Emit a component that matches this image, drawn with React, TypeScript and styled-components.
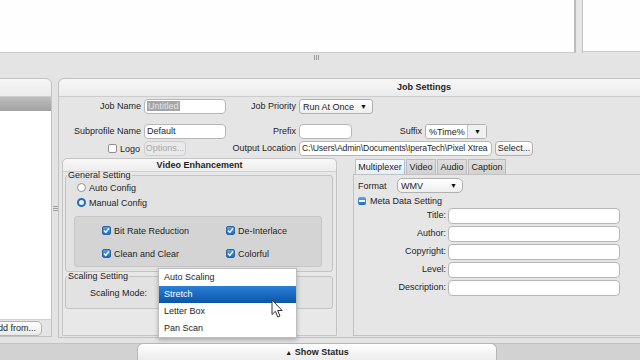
import { Fragment } from "react";
import styled, { createGlobalStyle } from "styled-components";

const GlobalStyle = createGlobalStyle`
  html, body {
    margin: 0;
    padding: 0;
  }
  body {
    width: 640px;
    height: 360px;
    overflow: hidden;
    background: #e3e3e3;
    font-family: "Liberation Sans", Arial, sans-serif;
    font-size: 9px;
    color: #1e1e1e;
  }
  * {
    box-sizing: border-box;
  }
`;

const metaFields = ["Title:", "Author:", "Copyright:", "Level:", "Description:"];
const scaleOptions = ["Auto Scaling", "Stretch", "Letter Box", "Pan Scan"];
const tabs = [
  { label: "Multiplexer", width: 50 },
  { label: "Video", width: 30 },
  { label: "Audio", width: 30 },
  { label: "Caption", width: 38 },
];

function Arrow() {
  return <ArrowMark>▼</ArrowMark>;
}

function CheckMark() {
  return (
    <CheckBox $checked>
      <svg width="7" height="7" viewBox="0 0 7 7">
        <path d="M1 3.6 L2.8 5.4 L6 1.4" fill="none" stroke="#fff" strokeWidth="1.4" />
      </svg>
    </CheckBox>
  );
}

function Pointer() {
  return (
    <Cursor width="13" height="20" viewBox="0 0 13 20">
      <path
        d="M1 1 L1 15.5 L4.4 12.3 L6.8 18 L9 17 L6.7 11.5 L11.2 11.5 Z"
        fill="#fff"
        stroke="#333"
        strokeWidth="1"
        strokeLinejoin="round"
      />
    </Cursor>
  );
}

export default function App() {
  return (
    <>
      <GlobalStyle />
      <Screen>
        <TopRow>
          <WhitePane />
          <PaneGap />
          <SmallPane />
        </TopRow>
        <HSplitter>
          <HGrip>
            <i />
            <i />
            <i />
          </HGrip>
        </HSplitter>
        <Middle>
          <SidePanel>
            <SideHeader />
            <ListHead />
            <ListBody />
            <SideFooter>
              <SideButton>Add from...</SideButton>
            </SideFooter>
          </SidePanel>
          <VSplitter>
            <VGrip>
              <i />
              <i />
              <i />
            </VGrip>
          </VSplitter>
          <MainPanel>
            <PanelHeader>Job Settings</PanelHeader>
            <FormRow $top={2}>
              <Label>Job Name</Label>
              <Field>
                <Selected>Untitled</Selected>
              </Field>
              <Label>Job Priority</Label>
              <Control>
                <SelectBox $w={74}>
                  Run At Once
                  <Arrow />
                </SelectBox>
              </Control>
            </FormRow>
            <FormRow $top={10}>
              <Label>Subprofile Name</Label>
              <Field>Default</Field>
              <Label>Prefix</Label>
              <Control>
                <Field $w={53} />
                <Label $w={67}>Suffix</Label>
                <SelectBox $w={62} $split>
                  %Time%
                  <Arrow />
                </SelectBox>
              </Control>
            </FormRow>
            <FormRow $top={2}>
              <CheckLabel>
                <CheckBox />
                Logo
              </CheckLabel>
              <div>
                <Button $disabled $w={42}>
                  Options...
                </Button>
              </div>
              <Label>Output Location</Label>
              <Control>
                <Field $w={193} $tight>
                  C:\Users\Admin\Documents\IperaTech\Pixel Xtrea
                </Field>
                <Button $w={38}>Select...</Button>
              </Control>
            </FormRow>
            <Lower>
              <VEPanel>
                <SubHeader>Video Enhancement</SubHeader>
                <GroupBox $gap={-2}>
                  <Legend>General Setting</Legend>
                  <RadioRow>
                    <Radio />
                    Auto Config
                  </RadioRow>
                  <RadioRow>
                    <Radio $on />
                    Manual Config
                  </RadioRow>
                  <InnerBox>
                    <CheckLabel $left>
                      <CheckMark />
                      Bit Rate Reduction
                    </CheckLabel>
                    <CheckLabel $left>
                      <CheckMark />
                      De-Interlace
                    </CheckLabel>
                    <CheckLabel $left>
                      <CheckMark />
                      Clean and Clear
                    </CheckLabel>
                    <CheckLabel $left>
                      <CheckMark />
                      Colorful
                    </CheckLabel>
                  </InnerBox>
                </GroupBox>
                <GroupBox $gap={-1}>
                  <Legend>Scaling Setting</Legend>
                  <ScaleRow>
                    Scaling Mode:
                    <DropList>
                      {scaleOptions.map((o) => (
                        <DropItem key={o} $active={o === "Stretch"}>
                          {o}
                        </DropItem>
                      ))}
                      <Pointer />
                    </DropList>
                  </ScaleRow>
                </GroupBox>
              </VEPanel>
              <TabPanel>
                <TabBar>
                  {tabs.map((t, i) => (
                    <Tab key={t.label} $active={i === 0} style={{ width: t.width }}>
                      {t.label}
                    </Tab>
                  ))}
                </TabBar>
                <TabBody>
                  <FormatRow>
                    <FormatLabel>Format</FormatLabel>
                    <SelectBox $w={66} $round>
                      WMV
                      <Arrow />
                    </SelectBox>
                  </FormatRow>
                  <MetaHead>
                    <Minus />
                    Meta Data Setting
                  </MetaHead>
                  <MetaGrid>
                    {metaFields.map((f) => (
                      <Fragment key={f}>
                        <Label>{f}</Label>
                        <Field $w={172} $tall />
                      </Fragment>
                    ))}
                  </MetaGrid>
                </TabBody>
              </TabPanel>
            </Lower>
          </MainPanel>
        </Middle>
        <BottomBar>
          <StatusStrip>
            <StatusButton>
              <span>▲</span> Show Status
            </StatusButton>
          </StatusStrip>
        </BottomBar>
      </Screen>
    </>
  );
}

const Screen = styled.div`
  width: 640px;
  height: 360px;
  display: flex;
  flex-direction: column;
  overflow: hidden;
`;

const TopRow = styled.div`
  height: 53px;
  display: flex;
`;

const WhitePane = styled.div`
  flex: 1;
  background: #fefefe;
  border-right: 2px solid #bcbcbc;
  border-bottom: 1px solid #cbcbcb;
`;

const PaneGap = styled.div`
  width: 7px;
  background: #e6e6e6;
  border-right: 1px solid #c4c4c4;
`;

const SmallPane = styled.div`
  width: 57px;
  height: 52px;
  background: #fefefe;
  border-bottom: 1px solid #cbcbcb;
`;

const HSplitter = styled.div`
  height: 25px;
  background: #e4e4e4;
  display: flex;
  justify-content: center;
  padding: 2px 8px 0 0;
`;

const HGrip = styled.div`
  display: flex;
  gap: 1px;
  height: 5px;

  i {
    width: 1px;
    background: #9a9a9a;
  }
`;

const Middle = styled.div`
  flex: 1;
  display: flex;
  min-height: 0;
`;

const SidePanel = styled.div`
  width: 120px;
  margin-left: -68px;
  display: flex;
  flex-direction: column;
  border: 1px solid #c3c3c3;
  border-radius: 0 6px 0 0;
  background: #e5e5e5;
  margin-bottom: 1px;
`;

const SideHeader = styled.div`
  height: 18px;
  background: linear-gradient(#f6f6f6, #ebebeb);
  border-bottom: 1px solid #cfcfcf;
  border-radius: 0 6px 0 0;
`;

const ListHead = styled.div`
  height: 14px;
  background: linear-gradient(#bdbdbd, #a2a2a2);
`;

const ListBody = styled.div`
  flex: 1;
  background: #ffffff;
  border-bottom: 1px solid #d0d0d0;
`;

const SideFooter = styled.div`
  height: 16px;
  display: flex;
  justify-content: flex-end;
  align-items: flex-start;
  padding: 1px 9px 0 0;
`;

const SideButton = styled.div`
  height: 15px;
  line-height: 13px;
  padding: 0 5px;
  border: 1px solid #b3b3b3;
  border-radius: 5px;
  background: linear-gradient(#ffffff, #e9e9e9);
  white-space: nowrap;
`;

const VSplitter = styled.div`
  width: 6px;
  display: flex;
  align-items: center;
  justify-content: center;
`;

const VGrip = styled.div`
  display: flex;
  flex-direction: column;
  gap: 1px;
  width: 5px;

  i {
    height: 1px;
    background: #a0a0a0;
  }
`;

const MainPanel = styled.div`
  flex: 1;
  margin-right: -150px;
  display: flex;
  flex-direction: column;
  border: 1px solid #c2c2c2;
  border-radius: 6px 6px 0 0;
  background: #e5e5e5;
`;

const PanelHeader = styled.div`
  height: 18px;
  line-height: 16px;
  text-align: center;
  font-weight: bold;
  background: linear-gradient(#f7f7f7, #ebebeb);
  border-bottom: 1px solid #cdcdcd;
  border-radius: 6px 6px 0 0;
`;

const FormRow = styled.div<{ $top: number }>`
  display: grid;
  grid-template-columns: 82px 82px 67px auto;
  column-gap: 3px;
  height: 15px;
  margin-top: ${(p) => p.$top}px;
`;

const Label = styled.div<{ $w?: number }>`
  text-align: right;
  line-height: 15px;
  white-space: nowrap;
  ${(p) => (p.$w ? `width: ${p.$w}px;` : "")}
`;

const Control = styled.div`
  display: flex;
  gap: 3px;
`;

const Field = styled.div<{ $w?: number; $tall?: boolean; $tight?: boolean }>`
  height: ${(p) => (p.$tall ? 16 : 15)}px;
  ${(p) => (p.$w ? `width: ${p.$w}px;` : "")}
  border: 1px solid #b6b6b6;
  border-radius: 4px;
  background: #ffffff;
  padding: 0 2px;
  line-height: 13px;
  white-space: nowrap;
  overflow: hidden;
  ${(p) => (p.$tight ? "font-size: 8.6px; letter-spacing: -0.1px;" : "")}
`;

const Selected = styled.span`
  background: #a5a5a5;
  color: #e4e4e4;
  padding: 0 1px;
`;

const SelectBox = styled.div<{ $w: number; $split?: boolean; $round?: boolean }>`
  width: ${(p) => p.$w}px;
  height: 15px;
  display: flex;
  justify-content: space-between;
  align-items: center;
  border: 1px solid #b0b0b0;
  border-radius: ${(p) => (p.$round ? 5 : 3)}px;
  background: ${(p) => (p.$split ? "#ffffff" : "linear-gradient(#ffffff, #eeeeee)")};
  padding: 0 0 0 3px;
  white-space: nowrap;

  span {
    ${(p) => (p.$split ? "border-left: 1px solid #c4c4c4; background: #f0f0f0;" : "")}
  }
`;

const ArrowMark = styled.span`
  height: 13px;
  line-height: 13px;
  font-size: 7px;
  padding: 0 5px 0 6px;
  color: #111;
`;

const CheckLabel = styled.div<{ $left?: boolean }>`
  display: flex;
  align-items: center;
  justify-content: ${(p) => (p.$left ? "flex-start" : "flex-end")};
  gap: 3px;
  height: 15px;
  padding-right: ${(p) => (p.$left ? 0 : 1)}px;
  white-space: nowrap;
`;

const CheckBox = styled.span<{ $checked?: boolean }>`
  width: 9px;
  height: 9px;
  display: flex;
  align-items: center;
  justify-content: center;
  border-radius: 2px;
  border: 1px solid ${(p) => (p.$checked ? "#2a64a8" : "#8f8f8f")};
  background: ${(p) => (p.$checked ? "linear-gradient(#5aa0e6, #1f6cc0)" : "#ffffff")};
`;

const Button = styled.div<{ $w: number; $disabled?: boolean }>`
  width: ${(p) => p.$w}px;
  height: 15px;
  line-height: 13px;
  text-align: center;
  border: 1px solid ${(p) => (p.$disabled ? "#cdcdcd" : "#b0b0b0")};
  border-radius: 4px;
  background: ${(p) => (p.$disabled ? "#e9e9e9" : "linear-gradient(#ffffff, #eaeaea)")};
  color: ${(p) => (p.$disabled ? "#a8a8a8" : "#1e1e1e")};
  white-space: nowrap;
`;

const Lower = styled.div`
  flex: 1;
  display: flex;
  margin-top: 2px;
  padding: 0 0 1px 3px;
`;

const VEPanel = styled.div`
  width: 275px;
  display: flex;
  flex-direction: column;
  border: 1px solid #c4c4c4;
  border-radius: 5px 5px 0 0;
  background: #e8e8e8;
`;

const SubHeader = styled.div`
  height: 13px;
  line-height: 12px;
  text-align: center;
  font-weight: bold;
  background: linear-gradient(#f8f8f8, #ededed);
  border-bottom: 1px solid #cfcfcf;
  border-radius: 5px 5px 0 0;
`;

const GroupBox = styled.fieldset<{ $gap?: number }>`
  margin: ${(p) => p.$gap ?? 1}px 3px 0 2px;
  padding: 0 0 4px 0;
  border: 1px solid #c4c4c4;
  border-radius: 3px;
  background: #e2e2e2;
  min-width: 0;
`;

const Legend = styled.legend`
  padding: 0 1px;
  margin-left: 1px;
  line-height: 10px;
  font-size: 9px;
`;

const RadioRow = styled.div`
  display: flex;
  align-items: center;
  gap: 3px;
  height: 15px;
  padding-left: 11px;
`;

const Radio = styled.span<{ $on?: boolean }>`
  width: 9px;
  height: 9px;
  border-radius: 50%;
  border: ${(p) => (p.$on ? "2.5px solid #1f6cc0" : "1px solid #8f8f8f")};
  background: ${(p) => (p.$on ? "#eaf3fc" : "#ffffff")};
`;

const InnerBox = styled.div`
  margin: 6px 10px 0 8px;
  padding: 6px 0 5px 27px;
  display: grid;
  grid-template-columns: 124px auto;
  grid-auto-rows: 15px;
  row-gap: 8px;
  background: #d4d4d4;
  border: 1px solid #c6c6c6;
  border-radius: 3px;
`;

const ScaleRow = styled.div`
  position: relative;
  height: 15px;
  line-height: 15px;
  margin-top: 5px;
  padding-left: 24px;
  margin-bottom: 3px;
`;

const DropList = styled.div`
  position: absolute;
  left: 92px;
  top: -18px;
  width: 139px;
  background: #ffffff;
  border: 1px solid #bdbdbd;
  box-shadow: 0 2px 4px rgba(0, 0, 0, 0.25);
`;

const DropItem = styled.div<{ $active?: boolean }>`
  height: 17px;
  line-height: 17px;
  padding-left: 5px;
  background: ${(p) => (p.$active ? "linear-gradient(#2b7fd6, #0a56a8)" : "transparent")};
  color: ${(p) => (p.$active ? "#ffffff" : "#1e1e1e")};
`;

const Cursor = styled.svg`
  position: absolute;
  left: 112px;
  top: 30px;
`;

const TabPanel = styled.div`
  flex: 1;
  margin: 1px 0 0 16px;
  display: flex;
  flex-direction: column;
`;

const TabBar = styled.div`
  display: flex;
  height: 15px;
  padding-left: 2px;
  gap: 1px;
`;

const Tab = styled.div<{ $active?: boolean }>`
  height: 15px;
  line-height: 14px;
  text-align: center;
  border: 1px solid ${(p) => (p.$active ? "#a9c3dd" : "#bcbcbc")};
  border-bottom: none;
  background: ${(p) => (p.$active ? "linear-gradient(#f4f8fc, #e6eef7)" : "linear-gradient(#dedede, #d2d2d2)")};
`;

const TabBody = styled.div`
  flex: 1;
  border: 1px solid #c2c2c2;
  background: #e6e6e6;
  padding: 3px 0 0 4px;
`;

const FormatRow = styled.div`
  display: flex;
  align-items: center;
  height: 15px;
`;

const FormatLabel = styled.div`
  width: 39px;
`;

const MetaHead = styled.div`
  display: flex;
  align-items: center;
  gap: 4px;
  height: 12px;
  margin-top: 2px;
`;

const Minus = styled.span`
  width: 8px;
  height: 8px;
  border-radius: 2px;
  background: linear-gradient(#5aa6ee, #1f6cc0);
  display: flex;
  align-items: center;
  justify-content: center;

  &::after {
    content: "";
    width: 6px;
    height: 2px;
    background: #fff;
  }
`;

const MetaGrid = styled.div`
  display: grid;
  grid-template-columns: 92px 172px;
  column-gap: 2px;
  row-gap: 2px;
  margin: 1px 0 0 -4px;
`;

const BottomBar = styled.div`
  height: 22px;
  padding-top: 5px;
  background: #e3e3e3;
`;

const StatusStrip = styled.div`
  height: 17px;
  display: flex;
  background: #d2d2d2;
  border-top: 1px solid #c2c2c2;
`;

const StatusButton = styled.div`
  margin: -1px 0 0 137px;
  width: 360px;
  height: 18px;
  line-height: 16px;
  text-align: center;
  font-weight: bold;
  border: 1px solid #b6b6b6;
  border-bottom: none;
  border-radius: 6px 6px 0 0;
  background: linear-gradient(#ffffff, #ebebeb);

  span {
    font-size: 7px;
  }
`;
